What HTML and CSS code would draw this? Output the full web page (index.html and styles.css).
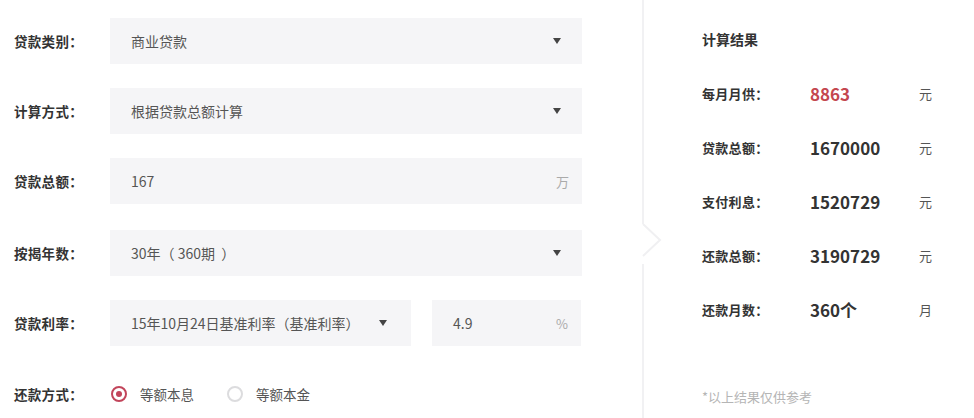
FILE: index.html
```html
<!DOCTYPE html>
<html lang="zh">
<head>
<meta charset="utf-8">
<title>房贷计算器</title>
<link rel="stylesheet" href="styles.css">
</head>
<body>
<div class="page">
  <div class="form">
    <div class="row">
      <div class="label">贷款类别：</div>
      <div class="field wide"><span class="val">商业贷款</span><span class="caret"></span></div>
    </div>
    <div class="row">
      <div class="label">计算方式：</div>
      <div class="field wide"><span class="val">根据贷款总额计算</span><span class="caret"></span></div>
    </div>
    <div class="row">
      <div class="label">贷款总额：</div>
      <div class="field wide input"><span class="val">167</span><span class="unit">万</span></div>
    </div>
    <div class="row">
      <div class="label">按揭年数：</div>
      <div class="field wide"><span class="val">30年（&nbsp;360期&nbsp;&nbsp;）</span><span class="caret"></span></div>
    </div>
    <div class="row">
      <div class="label">贷款利率：</div>
      <div class="field rate"><span class="val">15年10月24日基准利率（基准利率）</span><span class="caret"></span></div>
      <div class="field small input"><span class="val">4.9</span><span class="unit">%</span></div>
    </div>
    <div class="row radios">
      <div class="label">还款方式：</div>
      <label class="radio on"><span class="dot"></span>等额本息</label>
      <label class="radio"><span class="dot"></span>等额本金</label>
    </div>
  </div>
  <div class="result">
    <svg class="chev" width="24" height="40" viewBox="0 0 24 40"><path d="M1 0 L18 16 L1 32" fill="none" stroke="#f0f0f2" stroke-width="2"/></svg>
    <div class="title">计算结果</div>
    <div class="rrow"><span class="rl">每月月供：</span><span class="rv red">8863</span><span class="ru">元</span></div>
    <div class="rrow"><span class="rl">贷款总额：</span><span class="rv">1670000</span><span class="ru">元</span></div>
    <div class="rrow"><span class="rl">支付利息：</span><span class="rv">1520729</span><span class="ru">元</span></div>
    <div class="rrow"><span class="rl">还款总额：</span><span class="rv">3190729</span><span class="ru">元</span></div>
    <div class="rrow"><span class="rl">还款月数：</span><span class="rv">360个</span><span class="ru">月</span></div>
    <div class="note">*以上结果仅供参考</div>
  </div>
</div>
</body>
</html>
```

FILE: styles.css
```css
html, body {
  margin: 0;
  padding: 0;
  background: #fff;
}
body {
  font-family: "Noto Sans CJK SC", "Microsoft YaHei", sans-serif;
  color: #333;
  width: 974px;
  height: 418px;
  overflow: hidden;
}
.page {
  display: flex;
  height: 418px;
}
.form {
  width: 642px;
  padding: 18px 0 0 14px;
  box-sizing: border-box;
  display: flex;
  flex-direction: column;
  gap: 24px;
}
.row {
  display: flex;
  align-items: center;
  height: 46px;
}
.row:nth-child(4) { margin-top: 2px; }
.label {
  width: 96px;
  font-size: 13.5px;
  font-weight: bold;
  color: #333;
  flex: none;
  letter-spacing: 0.3px;
}
.field {
  height: 46px;
  background: #f5f5f7;
  display: flex;
  align-items: center;
  justify-content: space-between;
  box-sizing: border-box;
  padding: 0 21px 0 21px;
  font-size: 14px;
  color: #555;
}
.field.wide { width: 472px; }
.field.rate { width: 301px; }
.field.small { width: 149px; margin-left: 21px; }
.field.input { padding-right: 13px; }
.caret {
  width: 0;
  height: 0;
  border-left: 4px solid transparent;
  border-right: 4px solid transparent;
  border-top: 6px solid #444;
}
.rate .caret { margin-right: 3px; }
.unit {
  color: #aaa;
  font-size: 13px;
}
.radios { margin-top: 1px; }
.radio {
  display: flex;
  align-items: center;
  font-size: 13.5px;
  color: #555;
  margin-right: 32px;
}
.dot {
  width: 16px;
  height: 16px;
  border: 2px solid #dcdcde;
  border-radius: 50%;
  box-sizing: border-box;
  margin: 0 13px 0 1px;
  display: inline-flex;
  align-items: center;
  justify-content: center;
}
.radio.on .dot {
  border-color: #c2455b;
}
.radio.on .dot::after {
  content: "";
  width: 6px;
  height: 6px;
  border-radius: 50%;
  background: #c2455b;
}
.result {
  position: relative;
  flex: 1;
  border-left: 2px solid #f1f1f3;
  padding: 12px 0 0 58px;
  box-sizing: border-box;
}
.chev {
  position: absolute;
  left: -2px;
  top: 224px;
  background: #fff;
}
.title {
  height: 54px;
  display: flex;
  align-items: center;
  font-size: 14px;
  font-weight: bold;
  color: #333;
}
.rrow {
  height: 54px;
  display: flex;
  align-items: center;
}
.rl {
  width: 108px;
  font-size: 13px;
  font-weight: bold;
  color: #333;
  letter-spacing: 0.3px;
}
.rv {
  width: 109px;
  font-size: 17px;
  font-weight: bold;
  color: #333;
}
.rv.red { color: #c4474f; }
.ru {
  font-size: 13px;
  color: #555;
}
.note {
  margin-top: 51px;
  font-size: 13px;
  color: #b5b5b5;
}
```
